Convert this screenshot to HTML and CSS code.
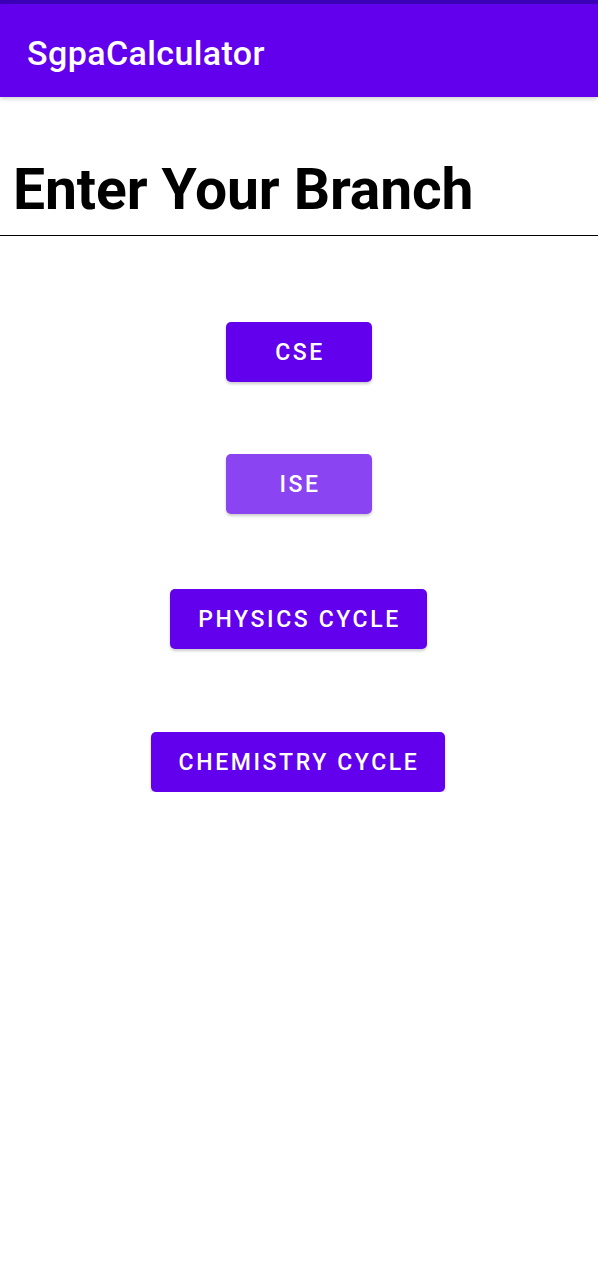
FILE: index.html
```html
<!DOCTYPE html>
<html>
<head>
<meta charset="utf-8">
<link rel="stylesheet" href="styles.css">
</head>
<body>
<div class="status"></div>
<header class="appbar"><span class="apptitle">SgpaCalculator</span></header>
<main class="content">
  <h1 class="heading">Enter Your Branch</h1>
  <div class="buttons">
    <button class="btn btn-cse">CSE</button>
    <button class="btn btn-ise light">ISE</button>
    <button class="btn btn-phy">PHYSICS CYCLE</button>
    <button class="btn btn-chem">CHEMISTRY CYCLE</button>
  </div>
</main>
</body>
</html>
```
FILE: styles.css
```css
html, body {
  margin: 0;
  padding: 0;
  background: #ffffff;
  font-family: Roboto, "Liberation Sans", sans-serif;
}
.status {
  height: 4px;
  background: #3a00b8;
}
.appbar {
  height: 93px;
  background: #6200ee;
  display: flex;
  align-items: center;
  padding-left: 27px;
  box-shadow: 0 2px 4px rgba(0,0,0,0.18);
  position: relative;
  z-index: 1;
}
.apptitle {
  color: #ffffff;
  font-size: 34px;
  font-weight: 500;
  letter-spacing: 0.4px;
  padding-top: 4px;
}
.heading {
  margin: 0;
  padding: 59px 0 0 13px;
  height: 79px;
  border-bottom: 1px solid #000000;
  font-size: 57px;
  font-weight: 700;
  line-height: 67px;
  color: #000000;
  letter-spacing: -0.1px;
}
.buttons {
  display: flex;
  flex-direction: column;
  align-items: center;
}
.btn {
  height: 60px;
  border: none;
  border-radius: 5px;
  background: #6200ee;
  color: #ffffff;
  font-family: Roboto, "Liberation Sans", sans-serif;
  font-size: 23px;
  font-weight: 500;
  letter-spacing: 2.6px;
  padding: 0 0 0 2px;
  box-shadow: 0 2px 3px rgba(0,0,0,0.2);
}
.btn.light { background: #8b44f2; }
.btn-cse { width: 146px; margin-top: 86px; }
.btn-ise { width: 146px; margin-top: 72px; }
.btn-phy { width: 257px; margin-top: 75px; margin-left: -1px; }
.btn-chem { width: 294px; margin-top: 83px; margin-left: -2px; }
```
